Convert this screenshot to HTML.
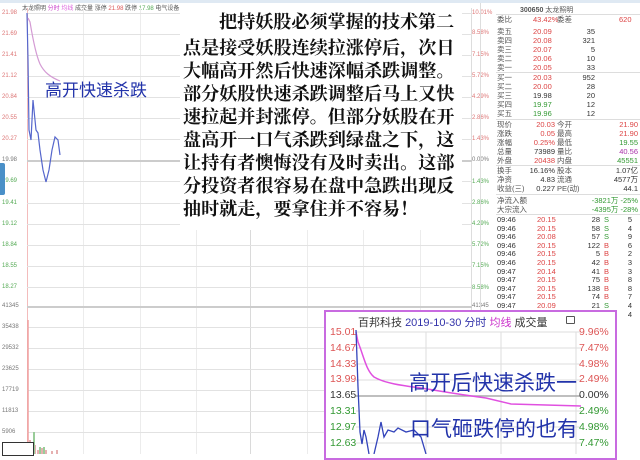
<!DOCTYPE html>
<html><head><meta charset="utf-8"><style>
*{margin:0;padding:0;box-sizing:border-box}
body{width:640px;height:454px;overflow:hidden;background:#fff;position:relative;font-family:"Liberation Sans","Noto Sans CJK SC",sans-serif}
.a{position:absolute;white-space:nowrap}
.hl{position:absolute;left:27px;width:445px;height:1px;background:#e2e2e2}
.vl{position:absolute;top:8px;height:446px;width:1px;background:#ececec}
.ll{position:absolute;left:2px;font-size:6px;color:#d77}
.rl{position:absolute;left:472px;font-size:6px;color:#d77}
.g{color:#5a5}
.rp{position:absolute;left:497px;font-size:7.5px;line-height:9px;white-space:nowrap}
.txt{position:absolute;left:180px;top:8px;width:282px;height:222px;background:#fff;font-family:"Noto Serif CJK SC","Liberation Serif",serif;font-weight:bold;font-size:18.1px;line-height:23px;color:#111;padding:2px 3px;white-space:nowrap;overflow:hidden}
</style></head><body>
<div class="a" style="left:0;top:0;width:640px;height:3px;background:#dfe9f3"></div>
<div class="a" style="left:22px;top:3px;font-size:6px;color:#555">太龙照明 <span style="color:#c4c">分时</span> <span style="color:#d6d">均线</span> 成交量 涨停 <span style="color:#d55">21.98</span> 跌停 <span style="color:#5a5">17.98</span> 电气设备</div>
<div class="vl" style="left:27px;background:#f3bcbc"></div>
<div class="vl" style="left:83px"></div><div class="vl" style="left:140px"></div><div class="vl" style="left:196px"></div><div class="vl" style="left:250px;background:#dadada"></div><div class="vl" style="left:307px"></div><div class="vl" style="left:363px"></div><div class="vl" style="left:420px"></div><div class="vl" style="left:471px;background:#ddd"></div>
<div class="hl" style="top:13px"></div><div class="hl" style="top:34px"></div><div class="hl" style="top:55px"></div><div class="hl" style="top:76px"></div><div class="hl" style="top:97px"></div><div class="hl" style="top:118px"></div><div class="hl" style="top:139px"></div><div class="hl" style="top:160px;background:#ccc;height:2px"></div><div class="hl" style="top:181px"></div><div class="hl" style="top:203px"></div><div class="hl" style="top:224px"></div><div class="hl" style="top:245px"></div><div class="hl" style="top:266px"></div><div class="hl" style="top:287px"></div><div class="hl" style="top:306px;background:#ccc;height:2px"></div><div class="hl" style="top:327px"></div><div class="hl" style="top:348px"></div><div class="hl" style="top:369px"></div><div class="hl" style="top:390px"></div><div class="hl" style="top:411px"></div><div class="hl" style="top:432px"></div>
<div class="ll" style="top:10px">21.98</div><div class="ll" style="top:31px">21.69</div><div class="ll" style="top:52px">21.41</div><div class="ll" style="top:73px">21.12</div><div class="ll" style="top:94px">20.84</div><div class="ll" style="top:115px">20.55</div><div class="ll" style="top:136px">20.27</div><div class="ll" style="top:157px;color:#777">19.98</div><div class="ll g" style="top:178px">19.69</div><div class="ll g" style="top:200px">19.41</div><div class="ll g" style="top:221px">19.12</div><div class="ll g" style="top:242px">18.84</div><div class="ll g" style="top:263px">18.55</div><div class="ll g" style="top:284px">18.27</div>
<div class="ll" style="top:303px;color:#777">41345</div><div class="ll" style="top:324px;color:#777">35438</div><div class="ll" style="top:345px;color:#777">29532</div><div class="ll" style="top:366px;color:#777">23625</div><div class="ll" style="top:387px;color:#777">17719</div><div class="ll" style="top:408px;color:#777">11813</div><div class="ll" style="top:429px;color:#777">5906</div>
<div class="rl" style="top:10px">10.01%</div><div class="rl" style="top:30px">8.58%</div><div class="rl" style="top:52px">7.15%</div><div class="rl" style="top:73px">5.72%</div><div class="rl" style="top:94px">4.29%</div><div class="rl" style="top:115px">2.86%</div><div class="rl" style="top:136px">1.43%</div><div class="rl" style="top:157px;color:#777">0.00%</div><div class="rl g" style="top:179px">1.43%</div><div class="rl g" style="top:200px">2.86%</div><div class="rl g" style="top:221px">4.29%</div><div class="rl g" style="top:242px">5.72%</div><div class="rl g" style="top:263px">7.15%</div><div class="rl g" style="top:285px">8.58%</div><div class="rl" style="top:303px;color:#777">41345</div>
<div class="a" style="left:0;top:163px;width:5px;height:32px;background:#4a90c8;border-radius:0 2px 2px 0"></div>
<svg class="a" style="left:0;top:0" width="480" height="454">
<path d="M27 13 L28 60 L29 130 L31 140 L33 100 L35 120 L36 130 L38 133 L40 150 L43 170 L46 182 L49 170 L52 150 L55 137 L58 140 L60 155" fill="none" stroke="#5566cc" stroke-width="1.2"/>
<path d="M28 18 L30 22 C33 40 36 55 40 64 C44 72 50 77 60 81" fill="none" stroke="#d49bd4" stroke-width="1.2"/>
<path d="M28 320 L28 454" stroke="#f0a0a0" stroke-width="1.5"/>
<path d="M30 440 L30 454 M33 446 L33 454 M35 445 L35 454 M38 450 L38 454 M42 448 L42 454 M46 450 L46 454 M52 451 L52 454 M57 450 L57 454" stroke="#e6b0b0" stroke-width="2"/>
<path d="M34 432 L34 454 M40 447 L40 454 M44 447 L44 454" stroke="#9c9" stroke-width="2"/>
</svg>
<div class="a" style="left:2px;top:442px;width:32px;height:14px;border:1px solid #333;background:#fff"></div>
<div class="a" style="left:45px;top:76px;font-size:17px;color:#2233aa;font-family:'Noto Sans CJK SC',sans-serif">高开快速杀跌</div>
<div class="txt"><div style="padding-left:36px;margin-bottom:3px">把持妖股必须掌握的技术第二</div>点是接受妖股连续拉涨停后，次日<br>大幅高开然后快速深幅杀跌调整。<br>部分妖股快速杀跌调整后马上又快<br>速拉起并封涨停。但部分妖股在开<br>盘高开一口气杀跌到绿盘之下，这<br>让持有者懊悔没有及时卖出。这部<br>分投资者很容易在盘中急跌出现反<br>抽时就走，要拿住并不容易！</div>
<div class="a" style="left:480px;top:3px;width:1px;height:451px;background:#ddd"></div>
<div class="a" style="left:520px;top:5px;font-size:7px;color:#555"><b>300650</b> 太龙照明</div>
<div class="a" style="left:496px;top:14px;width:144px;height:1px;background:#ddd"></div>
<div class="rp" style="top:15px;width:140px;color:#555">委比<span style="position:absolute;left:36px;color:#d44">43.42%</span><span style="position:absolute;left:60px">委差</span><span style="position:absolute;left:122px;color:#d44">620</span></div>
<div class="rp" style="top:27px;width:140px;color:#555;line-height:9px">卖五<br>卖四<br>卖三<br>卖二<br>卖一</div>
<div class="rp" style="top:27px;left:533px;color:#d44">20.09<br>20.08<br>20.07<br>20.06<br>20.05</div>
<div class="rp" style="top:27px;left:575px;width:20px;text-align:right;color:#333">35<br>321<br>5<br>10<br>33</div>
<div class="a" style="left:496px;top:72px;width:144px;height:1px;background:#ddd"></div>
<div class="rp" style="top:73px;color:#555">买一<br>买二<br>买三<br>买四<br>买五</div>
<div class="rp" style="top:73px;left:533px;color:#d44">20.03<br>20.00<br><span style="color:#333">19.98</span><br><span style="color:#393">19.97</span><br><span style="color:#393">19.96</span></div>
<div class="rp" style="top:73px;left:575px;width:20px;text-align:right;color:#333">952<br>28<br>20<br>12<br>12</div>
<div class="a" style="left:496px;top:119px;width:144px;height:1px;background:#ddd"></div>
<div class="rp" style="top:120px;color:#555">现价<br>涨跌<br>涨幅<br>总量<br>外盘</div>
<div class="rp" style="top:120px;left:525px;width:30px;text-align:right;color:#d44">20.03<br>0.05<br>0.25%<br><span style="color:#333">73989</span><br>20438</div>
<div class="rp" style="top:120px;left:557px;color:#555">今开<br>最高<br>最低<br>量比<br>内盘</div>
<div class="rp" style="top:120px;left:610px;width:28px;text-align:right;color:#d44">21.90<br>21.90<br><span style="color:#393">19.55</span><br><span style="color:#a3a">40.56</span><br><span style="color:#393">45551</span></div>
<div class="a" style="left:496px;top:165px;width:144px;height:1px;background:#ddd"></div>
<div class="rp" style="top:166px;color:#555">换手<br>净资<br>收益(三)</div>
<div class="rp" style="top:166px;left:525px;width:30px;text-align:right;color:#333">16.16%<br>4.83<br>0.227</div>
<div class="rp" style="top:166px;left:557px;color:#555">股本<br>流通<br>PE(动)</div>
<div class="rp" style="top:166px;left:600px;width:38px;text-align:right;color:#333">1.07亿<br>4577万<br>44.1</div>
<div class="a" style="left:496px;top:194px;width:144px;height:1px;background:#ddd"></div>
<div class="rp" style="top:196px;color:#555">净流入额<br>大宗流入</div>
<div class="rp" style="top:196px;left:570px;width:68px;text-align:right;color:#393">-3821万 -25%<br>-4395万 -28%</div>
<div class="a" style="left:496px;top:214px;width:144px;height:1px;background:#ddd"></div>
<div class="rp" style="top:216px;line-height:8.6px;color:#333">09:46<br>09:46<br>09:46<br>09:46<br>09:46<br>09:46<br>09:47<br>09:47<br>09:47<br>09:47<br>09:47<br>09:47</div>
<div class="rp" style="top:216px;left:537px;line-height:8.6px;color:#d44">20.15<br>20.15<br>20.08<br>20.15<br>20.15<br>20.15<br>20.14<br>20.15<br>20.15<br>20.15<br>20.09<br>20.09</div>
<div class="rp" style="top:216px;left:580px;width:20px;text-align:right;line-height:8.6px;color:#333">28<br>58<br>57<br>122<br>5<br>42<br>41<br>75<br>138<br>74<br>21<br>21</div>
<div class="rp" style="top:216px;left:604px;line-height:8.6px;color:#d44"><span style="color:#393">S</span><br><span style="color:#393">S</span><br><span style="color:#393">S</span><br>B<br>B<br>B<br>B<br>B<br>B<br>B<br><span style="color:#393">S</span><br><span style="color:#393">S</span></div>
<div class="rp" style="top:216px;left:620px;width:12px;text-align:right;line-height:8.6px;color:#333">5<br>4<br>9<br>6<br>2<br>3<br>3<br>8<br>8<br>7<br>4<br>4</div>
<div class="a" style="left:324px;top:310px;width:293px;height:150px;border:2px solid #c86be0;background:#fff"></div>
<div class="a" style="left:358px;top:314px;font-size:11px;color:#333">百邦科技 <span style="color:#33a">2019-10-30 分时</span> <span style="color:#c3c">均线</span> 成交量</div>
<div class="a" style="left:566px;top:316px;width:9px;height:8px;border:1px solid #555;border-radius:1px"></div>
<svg class="a" style="left:326px;top:312px" width="290" height="142">
<g stroke="#ddd" stroke-width="1"><path d="M30 20H255M30 36H255M30 52H255M30 68H255M30 99H255M30 115H255M30 131H255M100 20V142M175 20V142M250 20V142"/></g>
<path d="M30 84H255" stroke="#aaa" stroke-width="1.5"/>
<path d="M30 20 L32 30 C38 45 40 58 48 65 C60 72 80 74 95 76 C120 80 130 82 160 86 L185 92 L255 94" fill="none" stroke="#e050e0" stroke-width="1.5"/>
<path d="M30 18 L32 75 L34 120 L36 132 L38 118 L40 125 L43 142 M48 142 L52 125 L55 110 L58 125 L62 118 L68 120 L72 116 L80 120 L88 118 L95 125 L100 142" fill="none" stroke="#3344bb" stroke-width="1.3"/>
</svg>
<div class="a" style="left:330px;top:325px;font-size:10.5px;line-height:15.8px;color:#d55">15.01<br>14.67<br>14.33<br>13.99<br><span style="color:#333">13.65</span><br><span style="color:#393">13.31<br>12.97<br>12.63</span></div>
<div class="a" style="left:579px;top:325px;font-size:10.5px;line-height:15.8px;color:#d55">9.96%<br>7.47%<br>4.98%<br>2.49%<br><span style="color:#333">0.00%</span><br><span style="color:#393">2.49%<br>4.98%<br>7.47%</span></div>
<div class="a" style="left:409px;top:369px;font-size:21px;color:#2233aa;font-family:'Noto Sans CJK SC',sans-serif;line-height:26px">高开后快速杀跌一</div>
<div class="a" style="left:410px;top:415px;font-size:21px;color:#2233aa;font-family:'Noto Sans CJK SC',sans-serif;line-height:26px">口气砸跌停的也有</div>
</body></html>
